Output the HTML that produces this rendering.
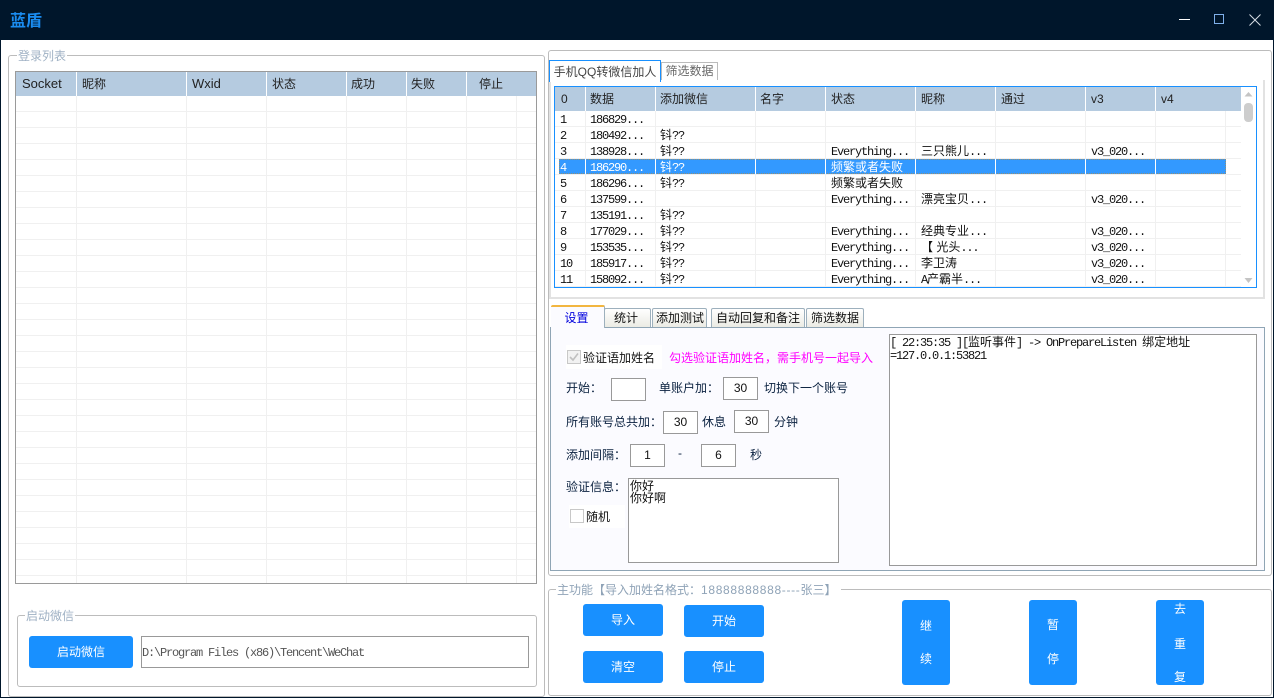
<!DOCTYPE html>
<html lang="zh"><head><meta charset="utf-8"><title>蓝盾</title>
<style>
html,body{margin:0;padding:0;width:1274px;height:698px;overflow:hidden;background:#fff}
body{position:relative;font:12px/16px "Liberation Sans","WenQuanYi Zen Hei","Noto Sans CJK SC",sans-serif;color:#111}
p,div.a{position:absolute;margin:0;white-space:nowrap}
p{line-height:16px}
tt{font-family:"Liberation Mono",monospace;font-size:12px;letter-spacing:-1.2px}
.box{position:absolute;box-sizing:border-box}
.g{border:1px solid #bcbcbc;border-radius:3px}
.lg{background:#fff;color:#9fb1c4;padding:0 1px;font-size:12px}
.hd{position:absolute;background:#b5cbe0}
.hs{position:absolute;width:1px;background:#fff}
.vl{position:absolute;width:1px;background:#f0f0f0}
.h{color:#222}
.btn{position:absolute;background:#1890ff;border-radius:3px;color:#fff;text-align:center;font-size:12px}
.in{position:absolute;box-sizing:border-box;border:1px solid #999;background:#fff;text-align:center;line-height:21px;color:#111;font-size:12px}
.t{color:#0b2240}
.tab{position:absolute;box-sizing:border-box;top:308px;height:19px;border:1px solid #9db0bd;border-bottom:0;border-radius:2px 2px 0 0;background:linear-gradient(#fff,#ebebe4);text-align:center;line-height:18px;color:#111}
</style></head><body>

<!-- title bar -->
<div class="box" style="left:0;top:0;width:1274px;height:40px;background:#00162b"></div>
<div class="box" style="left:0;top:40px;width:1px;height:658px;background:#00162b"></div>
<div class="box" style="left:1273px;top:40px;width:1px;height:658px;background:#00162b"></div>
<div class="box" style="left:0;top:697px;width:1274px;height:1px;background:#00162b"></div>
<p style="left:10px;top:12px;font-size:16px;font-weight:bold;line-height:20px;color:#1a8cf0">蓝盾</p>
<svg style="position:absolute;left:1170px;top:5px" width="104" height="30" fill="none">
<path d="M9 14.5H20" stroke="#fff"/>
<rect x="44.5" y="9.5" width="9" height="9" stroke="#7fb0ea"/>
<path d="M79.5 9.5L90.5 20.5M90.5 9.5L79.5 20.5" stroke="#d5dce4"/>
</svg>

<!-- login group -->
<div class="box g" style="left:8px;top:55px;width:537px;height:642px"></div>
<p class="lg" style="left:17px;top:48px">登录列表</p>
<div class="box" style="left:15px;top:71px;width:522px;height:513px;border:1px solid #9a9a9a"></div>
<div class="hd" style="left:16px;top:72px;width:520px;height:24px"></div>
<div class="box" style="left:16px;top:96px;width:520px;height:487px;background:repeating-linear-gradient(to bottom,transparent 0 15px,#f0f0f0 15px 16px)"></div>
<div class="hs" style="left:76px;top:72px;height:24px"></div><div class="hs" style="left:186px;top:72px;height:24px"></div><div class="hs" style="left:266px;top:72px;height:24px"></div><div class="hs" style="left:346px;top:72px;height:24px"></div><div class="hs" style="left:406px;top:72px;height:24px"></div><div class="hs" style="left:466px;top:72px;height:24px"></div>
<div class="vl" style="left:76px;top:96px;height:487px"></div><div class="vl" style="left:186px;top:96px;height:487px"></div><div class="vl" style="left:266px;top:96px;height:487px"></div><div class="vl" style="left:346px;top:96px;height:487px"></div><div class="vl" style="left:406px;top:96px;height:487px"></div><div class="vl" style="left:466px;top:96px;height:487px"></div><div class="vl" style="left:516px;top:96px;height:487px"></div>
<p class="h" style="left:22px;top:76px;font-size:13px">Socket</p>
<p class="h" style="left:82px;top:76px">昵称</p>
<p class="h" style="left:192px;top:76px;font-size:13px">Wxid</p>
<p class="h" style="left:272px;top:76px">状态</p>
<p class="h" style="left:351px;top:76px">成功</p>
<p class="h" style="left:411px;top:76px">失败</p>
<p class="h" style="left:479px;top:76px">停止</p>

<!-- start wechat group -->
<div class="box g" style="left:17px;top:615px;width:520px;height:72px"></div>
<p class="lg" style="left:25px;top:608px">启动微信</p>
<div class="btn" style="left:29px;top:636px;width:104px;height:32px;line-height:33px">启动微信</div>
<div class="box" style="left:141px;top:636px;width:388px;height:32px;border:1px solid #999"></div>
<p style="left:142px;top:644px;color:#555"><tt>D:\Program Files (x86)\Tencent\WeChat</tt></p>

<!-- right top group -->
<div class="box g" style="left:548px;top:50px;width:724px;height:526px"></div>
<div class="box" style="left:549px;top:80px;width:716px;height:219px;border:2px solid #e2e2e2;border-top:0"></div>
<div class="box" style="left:661px;top:62px;width:57px;height:18px;border:1px solid #bbb;border-bottom:0;background:#fff;text-align:center;line-height:17px;color:#666">筛选数据</div>
<div class="box" style="left:549px;top:60px;width:112px;height:22px;border:1px solid #1890ff;border-bottom:0;background:#fff;text-align:center;line-height:22px;color:#444">手机QQ转微信加人</div>

<!-- right table -->
<div class="box" style="left:554px;top:86px;width:703px;height:202px;border:1px solid #1890ff"></div>
<div class="hd" style="left:555px;top:87px;width:686px;height:24px"></div>
<div class="box" style="left:555px;top:111px;width:686px;height:176px;background:repeating-linear-gradient(to bottom,transparent 0 15px,#f0f0f0 15px 16px)"></div>
<div class="hs" style="left:585px;top:87px;height:24px"></div><div class="hs" style="left:655px;top:87px;height:24px"></div><div class="hs" style="left:755px;top:87px;height:24px"></div><div class="hs" style="left:825px;top:87px;height:24px"></div><div class="hs" style="left:915px;top:87px;height:24px"></div><div class="hs" style="left:995px;top:87px;height:24px"></div><div class="hs" style="left:1085px;top:87px;height:24px"></div><div class="hs" style="left:1155px;top:87px;height:24px"></div>
<div class="vl" style="left:585px;top:111px;height:176px"></div><div class="vl" style="left:655px;top:111px;height:176px"></div><div class="vl" style="left:755px;top:111px;height:176px"></div><div class="vl" style="left:825px;top:111px;height:176px"></div><div class="vl" style="left:915px;top:111px;height:176px"></div><div class="vl" style="left:995px;top:111px;height:176px"></div><div class="vl" style="left:1085px;top:111px;height:176px"></div><div class="vl" style="left:1155px;top:111px;height:176px"></div><div class="vl" style="left:1225px;top:111px;height:176px"></div>
<p class="h" style="left:561px;top:91px">0</p><p class="h" style="left:590px;top:91px">数据</p><p class="h" style="left:660px;top:91px">添加微信</p><p class="h" style="left:760px;top:91px">名字</p><p class="h" style="left:831px;top:91px">状态</p><p class="h" style="left:921px;top:91px">昵称</p><p class="h" style="left:1001px;top:91px">通过</p><p class="h" style="left:1091px;top:91px">v3</p><p class="h" style="left:1161px;top:91px">v4</p>

<!-- selected row -->
<div class="box" style="left:559px;top:159px;width:667px;height:15px;background:#3399ff;border:1px dotted #8f8f7a"></div>
<div class="hs" style="left:585px;top:159px;height:15px"></div><div class="hs" style="left:655px;top:159px;height:15px"></div><div class="hs" style="left:755px;top:159px;height:15px"></div><div class="hs" style="left:825px;top:159px;height:15px"></div><div class="hs" style="left:915px;top:159px;height:15px"></div><div class="hs" style="left:995px;top:159px;height:15px"></div><div class="hs" style="left:1085px;top:159px;height:15px"></div><div class="hs" style="left:1155px;top:159px;height:15px"></div>

<!-- rows -->
<p style="left:560px;top:111px"><tt>1</tt></p><p style="left:590px;top:111px"><tt>186829...</tt></p>
<p style="left:560px;top:127px"><tt>2</tt></p><p style="left:590px;top:127px"><tt>180492...</tt></p><p style="left:660px;top:127px">钭<tt>??</tt></p>
<p style="left:560px;top:143px"><tt>3</tt></p><p style="left:590px;top:143px"><tt>138928...</tt></p><p style="left:660px;top:143px">钭<tt>??</tt></p><p style="left:831px;top:143px"><tt>Everything...</tt></p><p style="left:921px;top:143px">三只熊儿<tt>...</tt></p><p style="left:1091px;top:143px"><tt>v3_020...</tt></p>
<p style="left:560px;top:159px;color:#fff"><tt>4</tt></p><p style="left:590px;top:159px;color:#fff"><tt>186290...</tt></p><p style="left:660px;top:159px;color:#fff">钭<tt>??</tt></p><p style="left:831px;top:159px;color:#fff">频繁或者失败</p>
<p style="left:560px;top:175px"><tt>5</tt></p><p style="left:590px;top:175px"><tt>186296...</tt></p><p style="left:660px;top:175px">钭<tt>??</tt></p><p style="left:831px;top:175px">频繁或者失败</p>
<p style="left:560px;top:191px"><tt>6</tt></p><p style="left:590px;top:191px"><tt>137599...</tt></p><p style="left:831px;top:191px"><tt>Everything...</tt></p><p style="left:921px;top:191px">漂亮宝贝<tt>...</tt></p><p style="left:1091px;top:191px"><tt>v3_020...</tt></p>
<p style="left:560px;top:207px"><tt>7</tt></p><p style="left:590px;top:207px"><tt>135191...</tt></p><p style="left:660px;top:207px">钭<tt>??</tt></p>
<p style="left:560px;top:223px"><tt>8</tt></p><p style="left:590px;top:223px"><tt>177029...</tt></p><p style="left:660px;top:223px">钭<tt>??</tt></p><p style="left:831px;top:223px"><tt>Everything...</tt></p><p style="left:921px;top:223px">经典专业<tt>...</tt></p><p style="left:1091px;top:223px"><tt>v3_020...</tt></p>
<p style="left:560px;top:239px"><tt>9</tt></p><p style="left:590px;top:239px"><tt>153535...</tt></p><p style="left:660px;top:239px">钭<tt>??</tt></p><p style="left:831px;top:239px"><tt>Everything...</tt></p><p style="left:921px;top:239px">【 光头<tt>...</tt></p><p style="left:1091px;top:239px"><tt>v3_020...</tt></p>
<p style="left:560px;top:255px"><tt>10</tt></p><p style="left:590px;top:255px"><tt>185917...</tt></p><p style="left:660px;top:255px">钭<tt>??</tt></p><p style="left:831px;top:255px"><tt>Everything...</tt></p><p style="left:921px;top:255px">李卫涛</p><p style="left:1091px;top:255px"><tt>v3_020...</tt></p>
<p style="left:560px;top:271px"><tt>11</tt></p><p style="left:590px;top:271px"><tt>158092...</tt></p><p style="left:660px;top:271px">钭<tt>??</tt></p><p style="left:831px;top:271px"><tt>Everything...</tt></p><p style="left:921px;top:271px"><tt>A</tt>产霸半<tt>...</tt></p><p style="left:1091px;top:271px"><tt>v3_020...</tt></p>

<!-- scrollbar -->
<svg style="position:absolute;left:1241px;top:87px" width="15" height="200">
<path d="M3.5 9.5L7.5 5L11.5 9.5Z" fill="#c4c4c4"/>
<rect x="3" y="16" width="9" height="19" rx="4" fill="#cdcdcd"/>
<path d="M3.5 191L7.5 196L11.5 191Z" fill="#c4c4c4"/>
</svg>

<!-- settings tab page -->
<div class="box" style="left:550px;top:327px;width:715px;height:244px;border:1px solid #8fa5b5;background:#fbfbff"></div>
<div class="tab" style="left:604px;width:47px;padding-right:3px">统计</div>
<div class="tab" style="left:652px;width:55px;padding-left:1px">添加测试</div>
<div class="tab" style="left:711px;width:94px">自动回复和备注</div>
<div class="tab" style="left:806px;width:58px">筛选数据</div>
<div class="box" style="left:551px;top:305px;width:54px;height:23px;background:#fbfbff;border-top:2px solid #f2b640;border-right:1px solid #9db0bd;border-radius:2px 2px 0 0;text-align:center;line-height:22px;color:#0000dd;padding-right:2px">设置</div>

<div class="box" style="left:566px;top:345px;width:96px;height:24px;background:#fff"></div>
<svg style="position:absolute;left:567px;top:350px" width="14" height="14" fill="none"><rect x=".5" y=".5" width="13" height="13" fill="#f2f2f2" stroke="#c8c8c8"/><path d="M3 7L6 10L11 3.5" stroke="#c0c0c0" stroke-width="1.6"/></svg>
<p style="left:583px;top:350px">验证语加姓名</p>
<p style="left:669px;top:350px;color:#ff00ff">勾选验证语加姓名，需手机号一起导入</p>

<p class="t" style="left:566px;top:380px">开始：</p>
<div class="in" style="left:611px;top:378px;width:35px;height:23px"></div>
<p class="t" style="left:659px;top:380px">单账户加：</p>
<div class="in" style="left:723px;top:377px;width:35px;height:23px">30</div>
<p class="t" style="left:764px;top:380px">切换下一个账号</p>

<p class="t" style="left:566px;top:414px">所有账号总共加：</p>
<div class="in" style="left:663px;top:411px;width:35px;height:23px">30</div>
<p class="t" style="left:702px;top:414px">休息</p>
<div class="in" style="left:734px;top:410px;width:35px;height:23px">30</div>
<p class="t" style="left:774px;top:414px">分钟</p>

<p class="t" style="left:566px;top:447px">添加间隔：</p>
<div class="in" style="left:630px;top:444px;width:35px;height:23px">1</div>
<p class="t" style="left:678px;top:445px">-</p>
<div class="in" style="left:701px;top:444px;width:35px;height:23px">6</div>
<p class="t" style="left:750px;top:447px">秒</p>

<p class="t" style="left:566px;top:479px">验证信息：</p>
<div class="box" style="left:628px;top:478px;width:211px;height:85px;border:1px solid #999;background:#fff"></div>
<p style="left:630px;top:480px;line-height:12px">你好<br>你好啊</p>
<div class="box" style="left:569px;top:505px;width:56px;height:23px;background:#fff"></div>
<div class="box" style="left:570px;top:509px;width:14px;height:14px;border:1px solid #c8c8c8;background:#fff"></div>
<p style="left:586px;top:509px">随机</p>

<!-- log -->
<div class="box" style="left:889px;top:334px;width:368px;height:232px;border:1px solid #999;background:#fff"></div>
<p style="left:890px;top:336px;line-height:12px;color:#111"><tt>[ 22:35:35 ][</tt>监听事件<tt>] -&gt; OnPrepareListen </tt>绑定地址<br><tt>=127.0.0.1:53821</tt></p>

<!-- main group -->
<div class="box g" style="left:548px;top:589px;width:724px;height:107px"></div>
<p class="lg" style="left:556px;top:582px;color:#8fa3b7;padding-right:5px">主功能【导入加姓名格式：<span style="letter-spacing:.67px">18888888888----</span>张三】</p>
<div class="btn" style="left:583px;top:604px;width:80px;height:32px;line-height:33px">导入</div>
<div class="btn" style="left:684px;top:605px;width:80px;height:32px;line-height:33px">开始</div>
<div class="btn" style="left:583px;top:651px;width:80px;height:32px;line-height:33px">清空</div>
<div class="btn" style="left:684px;top:651px;width:80px;height:32px;line-height:33px">停止</div>
<div class="btn" style="left:902px;top:600px;width:48px;height:85px"></div>
<p style="left:920px;top:618px;color:#fff">继</p><p style="left:920px;top:651px;color:#fff">续</p>
<div class="btn" style="left:1029px;top:600px;width:48px;height:85px"></div>
<p style="left:1047px;top:617px;color:#fff">暂</p><p style="left:1047px;top:651px;color:#fff">停</p>
<div class="btn" style="left:1156px;top:600px;width:48px;height:85px"></div>
<p style="left:1174px;top:601px;color:#fff">去</p><p style="left:1174px;top:636px;color:#fff">重</p><p style="left:1174px;top:669px;color:#fff">复</p>

</body></html>
